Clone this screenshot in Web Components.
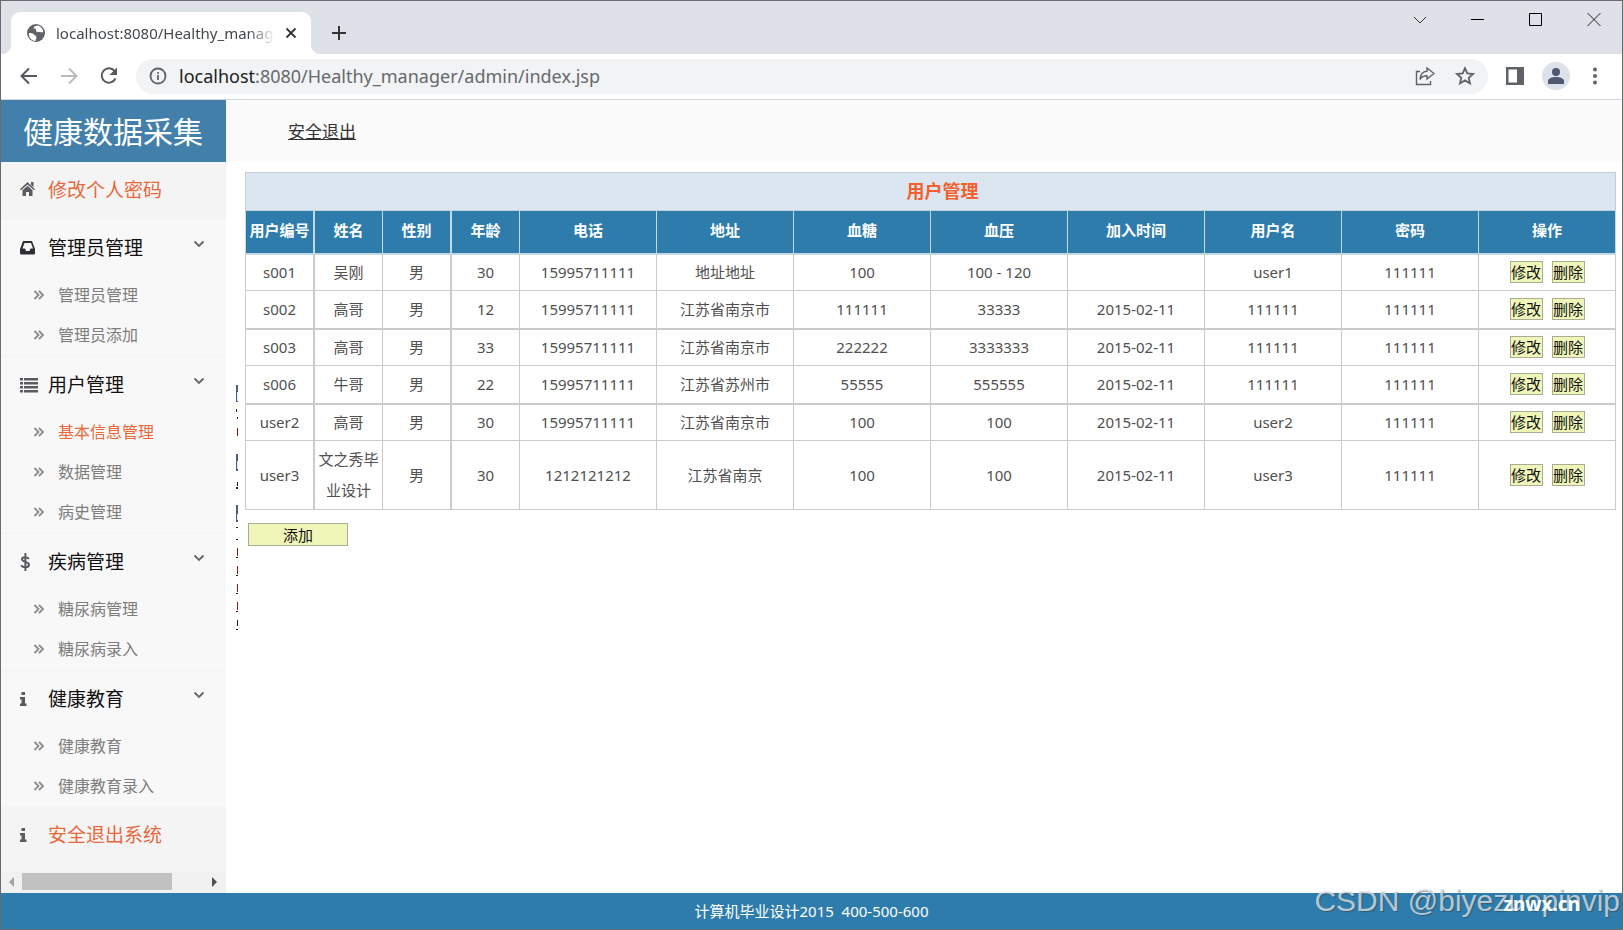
<!DOCTYPE html>
<html lang="zh-CN">
<head>
<meta charset="utf-8">
<title>健康数据采集</title>
<style>
html,body{margin:0;height:100%}
body{font-family:"Noto Sans","Noto Sans CJK SC",sans-serif;color:#444;background:#fff}
</style>
</head>
<body>
<app-window></app-window>
<script>
const define=(name,html,init)=>customElements.define(name,class extends HTMLElement{
  connectedCallback(){
    if(this.shadowRoot)return;
    const root=this.attachShadow({mode:"open"});
    root.innerHTML="<style>*{box-sizing:border-box}</style>"+(typeof html==="function"?html(this):html);
    if(init)init(root,this);
  }
});

define("tab-strip",`<style>
:host{display:flex;height:53px;background:#dee1e8;padding:0 21px 0 10px;justify-content:space-between;align-items:flex-start}
.left{display:flex;align-items:flex-end;height:53px}
.tab{position:relative;width:300px;height:42px;background:#fff;border-radius:9px 9px 0 0;display:flex;align-items:center;padding:0 14px 0 15px;gap:10px}
.tab::before,.tab::after{content:"";position:absolute;bottom:0;width:9px;height:9px}
.tab::before{left:-9px;background:radial-gradient(circle at 0 0,transparent 9px,#fff 9px)}
.tab::after{right:-9px;background:radial-gradient(circle at 100% 0,transparent 9px,#fff 9px)}
.name{flex:1;overflow:hidden;white-space:nowrap;font-size:15px;line-height:24px;color:#45494d;-webkit-mask-image:linear-gradient(90deg,#000 88%,transparent)}
button{border:0;background:none;padding:0;display:flex}
.add{margin:0 0 13px 20px}
.win{display:flex;gap:44px;padding-top:11px}
svg{flex:none}
</style>
<div class="left"><div class="tab">
<svg width="20" height="20" viewBox="0 0 20 20"><circle cx="10" cy="10" r="9" fill="#5f6368"/><path d="M3 10c2 0 4 0 5 1.500c1 1.500 2.500 1 2.500 3c0 1.500-1 2-1 3.500C5 18 2.500 14 3 10z" fill="#fff"/><path d="M12 2.500c3 1 5 3.500 5.300 6.500c-1.500 1-3-.5-4.500 0c-1.500.5-3-.5-2.800-2c.2-1.200-1-1.500-2.500-1.500c0-1.500 1-2.500 2.300-2.500z" fill="#fff"/></svg>
<span class="name">localhost:8080/Healthy_manager/admin</span>
<button aria-label="关闭标签"><svg width="12" height="12" viewBox="0 0 12 12"><path d="M1.500 1.500l9 9M10.500 1.500l-9 9" stroke="#333" stroke-width="1.800"/></svg></button>
</div><button class="add" aria-label="新标签"><svg width="16" height="16" viewBox="0 0 16 16"><path d="M8 1v14M1 8h14" stroke="#333" stroke-width="2"/></svg></button></div>
<div class="win">
<button aria-label="搜索标签"><svg width="14" height="14" viewBox="0 0 14 14"><path d="M1 5l6 6 6-6" fill="none" stroke="#333"/></svg></button>
<button aria-label="最小化"><svg width="14" height="14" viewBox="0 0 14 14"><path d="M0 7.500h13" stroke="#000"/></svg></button>
<button aria-label="最大化"><svg width="14" height="14" viewBox="0 0 14 14"><path d="M.5 1.500h12v12H.5z" fill="none" stroke="#000"/></svg></button>
<button aria-label="关闭"><svg width="14" height="14" viewBox="0 0 14 14"><path d="M.5 1l13 13M13.500 1l-13 13" stroke="#222"/></svg></button>
</div>`);

define("tool-bar",`<style>
:host{display:flex;align-items:center;height:46px;border-bottom:1px solid #d5d7da;background:#fff;padding:0 19px 1px 18px}
button{border:0;background:none;padding:0;display:flex}
.nav{display:flex;gap:20px;margin-right:17px}
.box{flex:1;height:35px;border-radius:18px;background:#f1f3f4;display:flex;align-items:center;padding:0 13px;margin-right:17px}
.url{flex:1;font-size:18px;line-height:24px;color:#66696d;margin-left:12px;white-space:nowrap;text-decoration:none}
b{font-weight:400;color:#202124}
.in{display:flex;gap:20px}
.out{display:flex;align-items:center;gap:17px}
.me{width:28px;height:28px;border-radius:50%;background:#dde1ea;justify-content:center;align-items:center}
</style>
<div class="nav">
<button aria-label="后退"><svg width="20" height="20" viewBox="0 0 20 20"><path d="M18 10H3M10 2.500L2.500 10l7.500 7.500" fill="none" stroke="#55585c" stroke-width="2"/></svg></button>
<button aria-label="前进"><svg width="20" height="20" viewBox="0 0 20 20"><path d="M2 10h15M10 2.500l7.500 7.500-7.500 7.500" fill="none" stroke="#b9bbbe" stroke-width="2"/></svg></button>
<button aria-label="刷新"><svg width="20" height="20" viewBox="0 0 20 20"><path d="M16.500 12.500A7.200 7.200 0 1 1 15.600 5" fill="none" stroke="#55585c" stroke-width="2"/><path d="M18 1.500V9h-7.500z" fill="#55585c"/></svg></button>
</div>
<div class="box">
<svg width="18" height="18" viewBox="0 0 18 18"><circle cx="9" cy="9" r="7.500" fill="none" stroke="#5f6368" stroke-width="1.800"/><path d="M9 8v5M9 5v1.800" stroke="#5f6368" stroke-width="1.800"/></svg>
<a class="url" href="#"><b>localhost</b>:8080/Healthy_manager/admin/index.jsp</a>
<div class="in">
<button aria-label="分享"><svg width="20" height="20" viewBox="0 0 20 20"><path d="M5 5.500H1.500v13h14V15" fill="none" stroke="#5f6368" stroke-width="1.400"/><path d="M12 2l7 5.500-7 5.500v-3.200c-3.500 0-5.500 1-7 3.700c.3-4.500 2.500-8 7-8.300z" fill="none" stroke="#5f6368" stroke-width="1.400"/></svg></button>
<button aria-label="收藏"><svg width="20" height="20" viewBox="0 0 20 20"><path d="M10 2.200l2.300 5.200 5.700.6-4.300 3.800 1.300 5.600-5-3-5 3 1.300-5.600L2 8l5.700-.6z" fill="none" stroke="#5f6368" stroke-width="1.800"/></svg></button>
</div></div>
<div class="out">
<button aria-label="侧边栏"><svg width="20" height="20" viewBox="0 0 20 20"><path d="M1 1h18v18H1zM3.500 3.500v13H12v-13z" fill="#5f6368" fill-rule="evenodd"/></svg></button>
<button class="me" aria-label="账户"><svg width="18" height="18" viewBox="0 0 18 18"><circle cx="9" cy="5" r="4" fill="#505872"/><path d="M1 17v-3c0-2.500 4-4 8-4s8 1.500 8 4v3z" fill="#505872"/></svg></button>
<button aria-label="菜单"><svg width="16" height="20" viewBox="0 0 16 20" fill="#5f6368"><circle cx="8" cy="3.500" r="2"/><circle cx="8" cy="10" r="2"/><circle cx="8" cy="16.500" r="2"/></svg></button>
</div>`);

const ICONS={
home:'<path d="M7.500 0L15 7.200l-1 1.100L7.500 2.400 1 8.300 0 7.200zM11 0h2.500v5L11 2.800zM2.500 8.300L7.500 3.800l5 4.500V14H9v-4H6v4H2.500z"/>',
inbox:'<path fill-rule="evenodd" fill="#2f2f33" d="M3 1h9l3 8v4.500q0 1-1.500 1h-12Q0 14.500 0 13.500V9zM4.500 3L2.500 8.500H5L6 11h3.500l1-2.500H13L11 3z"/>',
list:'<path d="M0 1h3v2.500H0zM4 1h14v2.500H4zM0 5h3v2.500H0zM4 5h14v2.500H4zM0 9h3v2.500H0zM4 9h14v2.500H4zM0 13h3v2.500H0zM4 13h14v2.500H4z"/>',
dollar:'<path d="M9 4.800C7 2.600 2 2.600 2 5.300C2 8.500 9 7.200 9 10.700C9 14 3 13.900 1 11.400M5.400 -1v18" fill="none" stroke="#5a5a60" stroke-width="2"/>',
info:'<path d="M1.500 1H5v3H1.500zM0 6h5v6.500h1.500V15H0v-2.500h1.500V8.500H0z"/>'};
const icon=n=>`<svg class="icon" width="18" height="16" viewBox="0 0 18 16" overflow="visible" fill="#5a5a60" aria-hidden="true">${ICONS[n]}</svg>`;

define("menu-single",el=>`<style>
:host{display:block;background:#f4f4f4}
a{display:flex;align-items:center;gap:10px;height:57px;padding:0 0 1px 19px;font-size:19px;line-height:28px;color:#e8683c;text-decoration:none;white-space:nowrap}
</style><a href="#">${icon(el.getAttribute("icon"))}<slot></slot></a>`);

define("menu-group",el=>`<style>
:host{display:block;background:#f8f8f8;border-top:1px solid #f3f3f3;padding-bottom:1px}
button{display:flex;align-items:center;gap:10px;width:100%;height:55px;padding:0 20px 0 19px;border:0;background:none;font:19px/28px "Noto Sans","Noto Sans CJK SC",sans-serif;color:#111;text-align:left}
.label{flex:1}
.chev{margin:0 1px 8px 0}
</style><button aria-expanded="true">${icon(el.getAttribute("icon"))}<span class="label">${el.getAttribute("label")}</span><svg class="chev" width="12" height="8" viewBox="0 0 12 8"><path d="M1.500 1.500L6 6l4.500-4.500" fill="none" stroke="#666" stroke-width="1.800"/></svg></button><slot></slot>`);

define("menu-link",`<style>
:host{display:block;color:#7d7d7d}
:host([active]){color:#e8683c}
a{display:flex;align-items:center;gap:13px;height:40px;padding-left:32px;font-size:16px;line-height:24px;color:inherit;text-decoration:none}
</style><a href="#"><svg width="12" height="10" viewBox="0 0 12 10"><path d="M1.500 1l4 4-4 4M6 1l4 4-4 4" fill="none" stroke="#8c8c8c" stroke-width="1.800"/></svg><slot></slot></a>`);

define("side-bar",`<style>
:host{display:flex;flex-direction:column;width:225px;flex:none;background:#f4f4f4}
h1{margin:0;height:62px;background:#4280ab;color:#fff;font-size:30px;font-weight:400;line-height:64px;padding-left:22px;white-space:nowrap}
nav{flex:1}
.scroll{height:21px;background:#f1f1f1;display:flex;align-items:center;padding:0 8px 2px 7px;gap:8px}
.thumb{width:150px;height:17px;background:#c1c1c1;margin-right:auto}
</style><h1>健康数据采集</h1>
<nav>
<menu-single icon="home">修改个人密码</menu-single>
<menu-group icon="inbox" label="管理员管理"><menu-link>管理员管理</menu-link><menu-link>管理员添加</menu-link></menu-group>
<menu-group icon="list" label="用户管理"><menu-link active>基本信息管理</menu-link><menu-link>数据管理</menu-link><menu-link>病史管理</menu-link></menu-group>
<menu-group icon="dollar" label="疾病管理"><menu-link>糖尿病管理</menu-link><menu-link>糖尿病录入</menu-link></menu-group>
<menu-group icon="info" label="健康教育"><menu-link>健康教育</menu-link><menu-link>健康教育录入</menu-link></menu-group>
<menu-single icon="info">安全退出系统</menu-single>
</nav>
<div class="scroll"><svg width="6" height="10"><path d="M6 0v10L1 5z" fill="#a3a3a3"/></svg><div class="thumb"></div><svg width="6" height="10"><path d="M0 0v10l5-5z" fill="#505050"/></svg></div>`);

const HEAD=["用户编号","姓名","性别","年龄","电话","地址","血糖","血压","加入时间","用户名","密码","操作"];
const ROWS=[
["s001","吴刚","男","30","15995711111","地址地址","100","100 - 120","","user1","111111"],
["s002","高哥","男","12","15995711111","江苏省南京市","111111","33333","2015-02-11","111111","111111"],
["s003","高哥","男","33","15995711111","江苏省南京市","222222","3333333","2015-02-11","111111","111111"],
["s006","牛哥","男","22","15995711111","江苏省苏州市","55555","555555","2015-02-11","111111","111111"],
["user2","高哥","男","30","15995711111","江苏省南京市","100","100","2015-02-11","user2","111111"],
["user3","文之秀毕业设计","男","30","1212121212","江苏省南京","100","100","2015-02-11","user3","111111"]];

define("user-table",`<style>
:host{display:block}
table{width:100%;table-layout:fixed;border-collapse:collapse;font-size:15px;line-height:31px;text-align:center;color:#505050}
col.s{width:5%}col.m{width:10%}
td,th{border:1px solid #c9cbcc;padding:2px}
td{height:37px}
tr:nth-child(even) td{height:38px;border-bottom-width:2px}
tr:last-child td{height:69px;border-bottom-width:1px}
th{background:#2d7cab;color:#fff;height:43px;padding:0 0 2px;border-color:#c3d8e2;border-bottom-width:2px}
td:nth-child(1),td:nth-child(3),th:nth-child(1),th:nth-child(3){border-right-width:2px}
.title th{background:#dce6f0;color:#f2602c;font-size:18px;height:38px;padding:0 0 0 24px;border-width:1px;border-color:#c3cfd6}
.acts{display:flex;justify-content:center;gap:9px}
button{border:1px solid #a9ad95;background:#f0f6b8;color:#111;padding:0;font:15px/20px "Noto Sans","Noto Sans CJK SC",sans-serif}
.acts button{width:33px;height:22px}
.add{display:block;width:100px;height:23px;margin:13px 0 0 3px}
</style>
<table><colgroup>${HEAD.map((_,i)=>`<col class="${i<4?"s":"m"}">`).join("")}</colgroup>
<thead><tr class="title"><th colspan="12">用户管理</th></tr><tr>${HEAD.map(h=>`<th scope="col">${h}</th>`).join("")}</tr></thead>
<tbody>${ROWS.map(r=>`<tr>${r.map(c=>`<td>${c}</td>`).join("")}<td><div class="acts"><button>修改</button><button>删除</button></div></td></tr>`).join("")}</tbody></table>
<button class="add">添加</button>`);

define("main-area",`<style>
:host{display:flex;flex-direction:column;flex:1;min-width:0}
header{height:62px;background:#fbfbfb;display:flex;align-items:center;padding:2px 0 0 62px}
a{color:#333;font-size:17px;line-height:24px}
.body{flex:1;display:flex;padding:10px 6px 0 9px}
.cut{flex:none;width:10px;margin-top:212px}
user-table{flex:1;min-width:0}
</style>
<header><a href="#">安全退出</a></header>
<div class="body">
<svg class="cut" width="10" height="256" viewBox="0 0 10 256" aria-hidden="true">
<path d="M1 1h2v17H1zM1 70h2v17H1zM1 121h2v17H1z" fill="#4b5a86"/>
<path d="M2 8h1v9H2zM2 77h1v8H2zM2 130h1v6H2z" fill="#e4ecfa"/>
<path d="M1 25h1v3H1zM2 33h1v2H2zM1 103h2v2H1zM2 98h1v4H2zM1 143h2v1H1zM1 155h2v1H1zM1 173h2v1H1zM1 191h2v1H1zM1 209h2v1H1zM1 227h2v1H1zM1 245h2v1H1zM2 236h1v6H2z" fill="#222"/>
<path d="M2 44h1v8H2zM2 164h1v8H2zM2 182h1v8H2zM2 200h1v8H2zM2 218h1v8H2z" fill="#8a1c10"/>
</svg>
<user-table></user-table></div>`);

define("page-footer",`<style>
:host{display:block;position:relative;height:36px;background:#2d7cab;color:#fff;font-size:15px;line-height:37px;text-align:center}
.mark,.site{position:absolute;white-space:nowrap}
.mark{right:2px;bottom:10px;font:30px/36px "Liberation Sans",sans-serif;color:rgba(225,232,238,.75);text-shadow:1px 1px 1px rgba(60,60,60,.5)}
.site{right:42px;bottom:11px;font-weight:700;font-size:19px;line-height:28px}
</style><slot></slot><span class="mark">CSDN @biyezuopinvip</span><span class="site">znwx.cn</span>`);

define("app-window",`<style>
:host{display:flex;flex-direction:column;min-height:100vh;border:1px solid #6b6b6f;background:#fff;box-sizing:border-box}
.mid{flex:1;display:flex}
</style><tab-strip></tab-strip><tool-bar></tool-bar>
<div class="mid"><side-bar></side-bar><main-area></main-area></div>
<page-footer>计算机毕业设计2015&nbsp; 400-500-600</page-footer>`);
</script>
</body>
</html>
